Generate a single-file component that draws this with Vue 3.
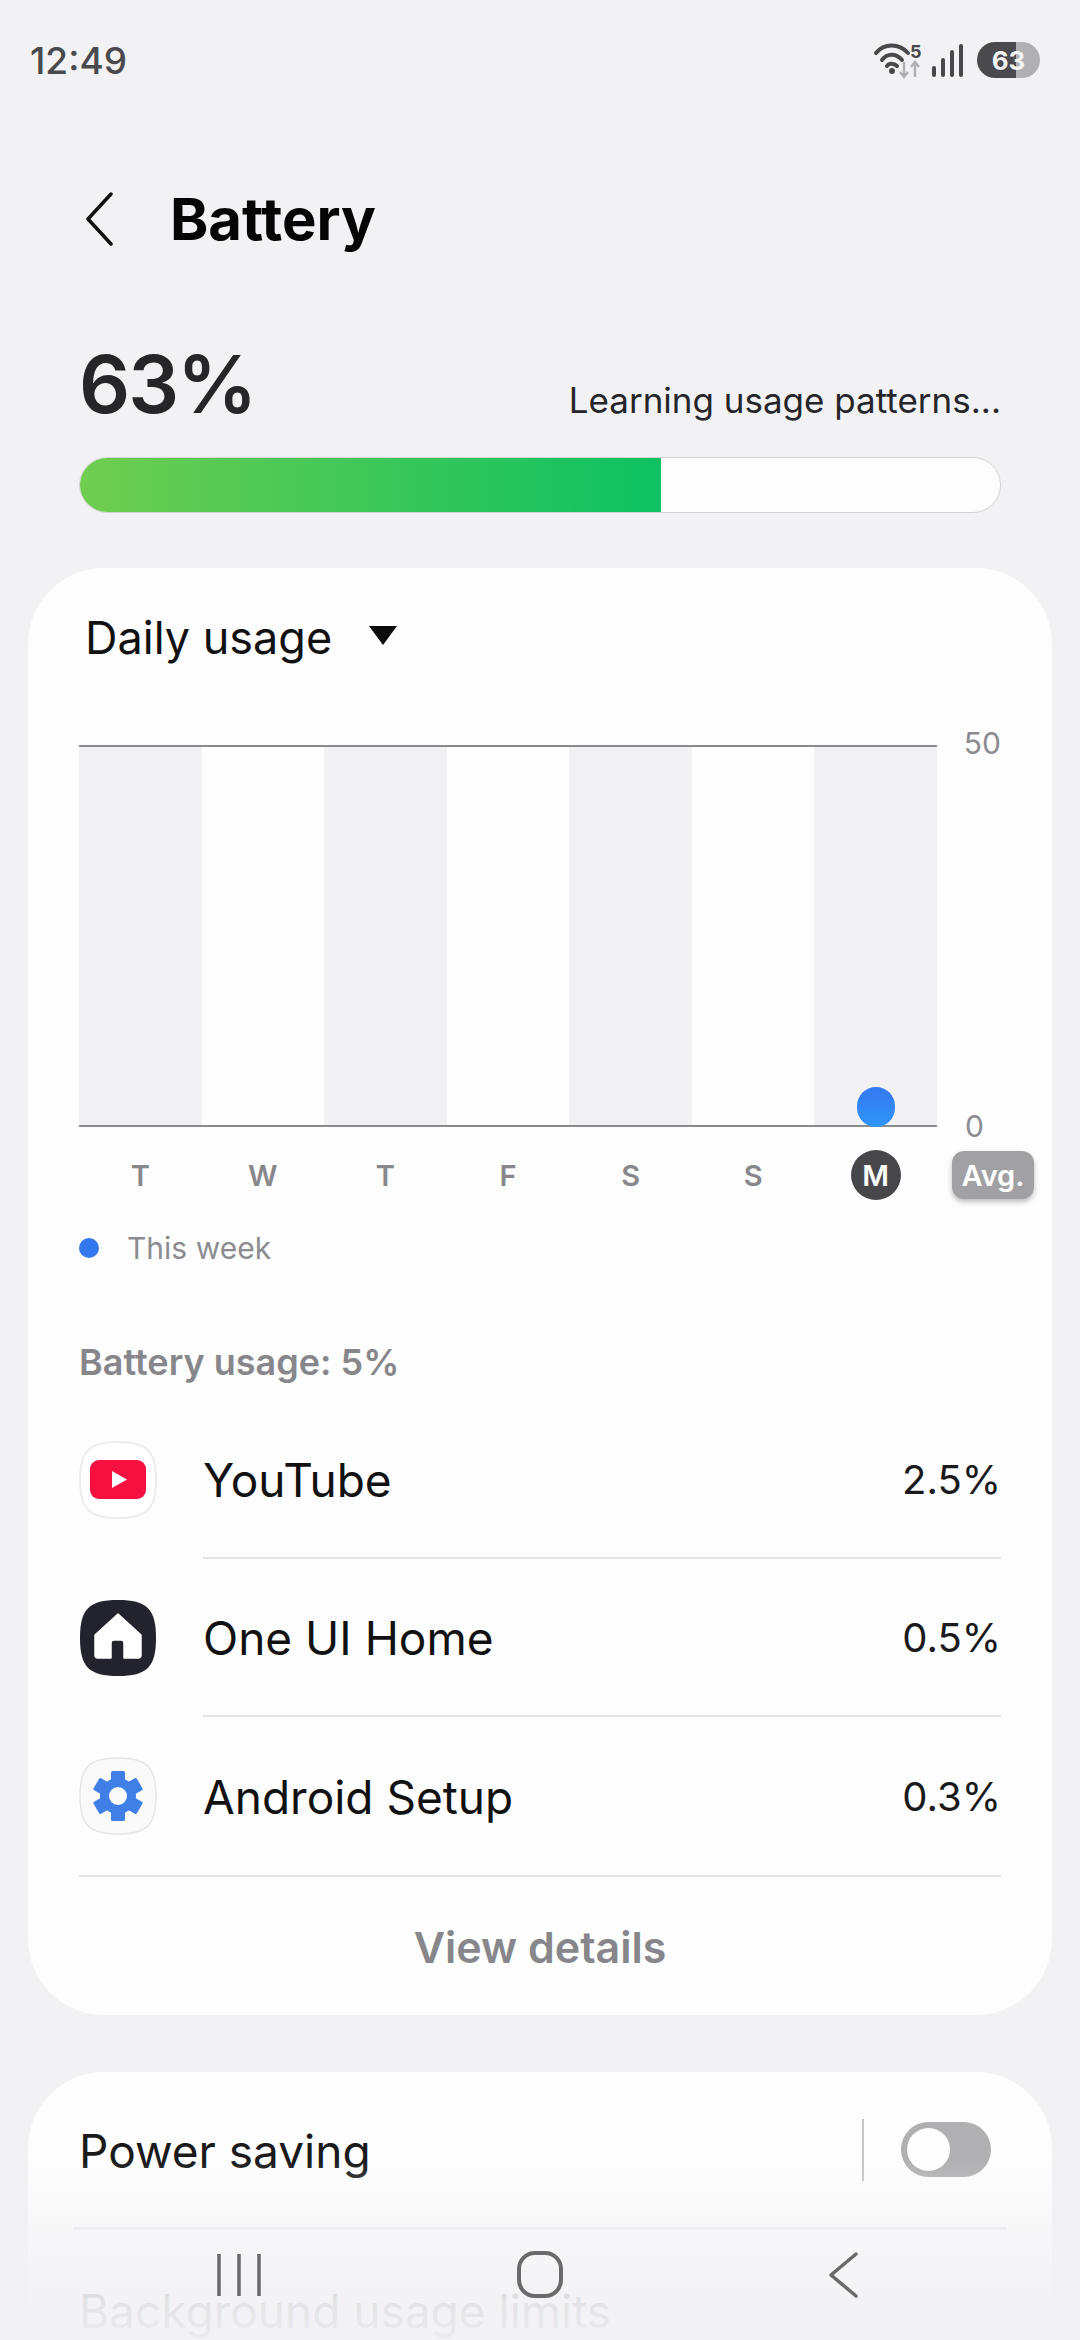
<template>
  <div class="screen">
    <div class="status-bar">
      <span class="clock">12:49</span>
      <div class="status-icons">
        <svg class="wifi" width="50" height="36" viewBox="0 0 50 36">
          <g fill="none" stroke="#48484c" stroke-width="4" stroke-linecap="round">
            <path d="M3 11 C11 1 26 1 35 11" />
            <path d="M9 18 C14 11 23 11 29 18" />
            <path d="M14 24 C16 21 21 21 24 24" />
          </g>
          <circle cx="19" cy="29" r="3" fill="#48484c" />
          <text x="37" y="16" class="wifi-num">5</text>
          <g fill="none" stroke="#b0b0b2" stroke-width="2.500">
            <path d="M31 20 V35 M27 30 L31 35 L35 30" />
            <path d="M42 35 V20 M38 25 L42 20 L46 25" />
          </g>
        </svg>
        <div class="signal">
          <i v-for="h in signalBars" :key="h" :style="{ height: h + 'px' }"></i>
        </div>
        <div class="batt"><span>63</span></div>
      </div>
    </div>

    <header class="title-row">
      <svg class="back" width="30" height="54" viewBox="0 0 30 54">
        <path d="M27 2 L4 27 L27 52" fill="none" stroke="#111" stroke-width="3.500" stroke-linecap="round" stroke-linejoin="round" />
      </svg>
      <h1>Battery</h1>
    </header>

    <div class="level">
      <div class="level-row">
        <span class="pct">63%</span>
        <span class="learning">Learning usage patterns...</span>
      </div>
      <div class="level-bar"><div class="level-fill"></div></div>
    </div>

    <section class="card usage">
      <div class="dropdown">
        <span>Daily usage</span>
        <i class="caret"></i>
      </div>

      <div class="chart">
        <div class="plot">
          <div v-for="(d, i) in days" :key="i" class="col" :class="{ shaded: i % 2 === 0 }">
            <div v-if="i === 6" class="bar"></div>
          </div>
        </div>
        <div class="axis">
          <span>50</span>
          <span>0</span>
        </div>
      </div>

      <div class="days">
        <div class="day-cols">
          <span v-for="(d, i) in days" :key="i" class="day" :class="{ today: i === 6 }">{{ d }}</span>
        </div>
        <span class="avg">Avg.</span>
      </div>

      <div class="legend">
        <i></i>
        <span>This week</span>
      </div>

      <h2 class="usage-title">Battery usage: 5%</h2>

      <div class="app-row">
        <svg class="app-icon" width="78" height="78" viewBox="0 0 78 78">
          <path :d="SQUIRCLE" fill="#fff" stroke="#e9e9ec" stroke-width="1.500" />
          <rect x="11" y="19" width="56" height="39" rx="9" fill="#f5103f" />
          <path d="M33 30 L48 38.500 L33 47 Z" fill="#fff" />
        </svg>
        <div class="app-body">
          <span class="app-name">YouTube</span>
          <span class="app-val">2.5%</span>
        </div>
      </div>
      <div class="app-row">
        <svg class="app-icon" width="78" height="78" viewBox="0 0 78 78">
          <path :d="SQUIRCLE" fill="#23232e" />
          <path d="M39 15 L62 36 V56 Q62 59 59 59 H45 V44 Q45 41 42 41 H35 Q32 41 32 44 V59 H19 Q16 59 16 56 V36 Z" fill="#fff" stroke="#fff" stroke-width="1.500" stroke-linejoin="round" />
        </svg>
        <div class="app-body">
          <span class="app-name">One UI Home</span>
          <span class="app-val">0.5%</span>
        </div>
      </div>
      <div class="app-row last">
        <svg class="app-icon" width="78" height="78" viewBox="0 0 78 78">
          <path :d="SQUIRCLE" fill="#fafafb" stroke="#e6e6e9" stroke-width="1.500" />
          <g fill="#3f7fe6">
            <rect v-for="a in gearTeeth" :key="a" x="32" y="14" width="14" height="50" rx="1.500" :transform="`rotate(${a} 39 39)`" />
            <circle cx="39" cy="39" r="18" />
          </g>
          <circle cx="39" cy="39" r="9" fill="#fafafb" />
        </svg>
        <div class="app-body">
          <span class="app-name">Android Setup</span>
          <span class="app-val">0.3%</span>
        </div>
      </div>

      <div class="view-details">View details</div>
    </section>

    <section class="card settings">
      <div class="setting-row first">
        <span>Power saving</span>
        <div class="toggle-wrap">
          <div class="toggle"><i></i></div>
        </div>
      </div>
      <div class="setting-row">
        <span>Background usage limits</span>
      </div>
    </section>

    <div class="nav">
      <svg width="46" height="44" viewBox="0 0 46 44" class="nav-recents">
        <path d="M3 1 V43 M23 1 V43 M43 1 V43" fill="none" stroke="#6a6a6e" stroke-width="3.500" />
      </svg>
      <svg width="48" height="47" viewBox="0 0 48 47" class="nav-home">
        <rect x="3" y="2" width="42" height="43" rx="16" fill="none" stroke="#6a6a6e" stroke-width="4" />
      </svg>
      <svg width="32" height="46" viewBox="0 0 32 46" class="nav-back">
        <path d="M29 2 L4 23 L29 44" fill="none" stroke="#6a6a6e" stroke-width="3.500" stroke-linecap="round" stroke-linejoin="round" />
      </svg>
    </div>
  </div>
</template>

<script setup>
const days = ['T', 'W', 'T', 'F', 'S', 'S', 'M'];
const signalBars = [11, 19, 27, 33];
const gearTeeth = [0, 60, 120];
const SQUIRCLE = 'M39 1 C68 1 77 10 77 39 C77 68 68 77 39 77 C10 77 1 68 1 39 C1 10 10 1 39 1 Z';
</script>

<style>
html, body { margin: 0; background: #f2f2f4; }
</style>

<style scoped>
* { box-sizing: border-box; margin: 0; padding: 0; }
.screen { position: relative; width: 1080px; height: 2340px; overflow: hidden; background: #f2f2f4; font-family: Inter, "Noto Sans", sans-serif; color: #111; }

/* status bar */
.status-bar { display: flex; justify-content: space-between; align-items: center; height: 120px; padding: 0 40px 0 30px; }
.clock { font-size: 37px; font-weight: 500; color: #4a4a4e; }
.status-icons { display: flex; align-items: center; }
.wifi { margin-right: 9px; overflow: visible; }
.wifi-num { font: 700 18px Inter, sans-serif; fill: #48484c; }
.signal { display: flex; align-items: flex-end; gap: 5px; height: 33px; margin-right: 14px; }
.signal i { width: 4px; background: #48484c; border-radius: 2px; }
.batt { width: 63px; height: 36px; border-radius: 18px; display: flex; align-items: center; justify-content: center; background: linear-gradient(90deg, #4a4a4e 0 62%, #b0b0b2 62% 100%); }
.batt span { font-size: 26px; font-weight: 700; color: #f4f4f4; }

/* title */
.title-row { display: flex; align-items: center; height: 60px; margin-top: 69px; padding-left: 84px; }
.back { margin-right: 56px; }
h1 { font-size: 58px; font-weight: 700; color: #050505; }

/* level */
.level { margin-top: 91px; padding: 0 79px; }
.level-row { display: flex; justify-content: space-between; align-items: flex-end; height: 88px; }
.pct { font-size: 80px; font-weight: 600; line-height: 88px; color: #26262a; letter-spacing: -2px; }
.learning { font-size: 35px; line-height: 44px; margin-bottom: 6px; color: #26262a; }
.level-bar { height: 56px; margin-top: 29px; border-radius: 28px; background: #fdfdfe; border: 1px solid #d3d3d6; overflow: hidden; }
.level-fill { width: 63.300%; height: 56px; background: linear-gradient(90deg, #70cd50, #0cc162); margin: -1px 0 0 -1px; }

/* cards */
.card { background: #fdfdfe; border-radius: 76px; margin: 0 28px; }
.usage { margin-top: 55px; height: 1447px; padding: 44px 51px 0 51px; }
.dropdown { display: flex; align-items: center; height: 50px; padding-left: 6px; font-size: 45px; color: #111; }
.caret { width: 0; height: 0; margin: -4px 0 0 37px; border-left: 14px solid transparent; border-right: 14px solid transparent; border-top: 19px solid #0c0c0c; }

/* chart */
.chart { display: flex; margin-top: 83px; height: 382px; }
.plot { display: grid; grid-template-columns: repeat(7, 1fr); flex: none; width: 858px; height: 100%; border-top: 2px solid #8a8a8d; border-bottom: 2px solid #8a8a8d; }
.col { display: flex; align-items: flex-end; justify-content: center; }
.col.shaded { background: #f2f2f4; }
.bar { width: 38px; height: 40px; margin-bottom: -2px; border-radius: 19px; background: linear-gradient(180deg, #3478f0, #2f96f8); }
.axis { display: flex; flex-direction: column; justify-content: space-between; align-items: flex-end; flex: 1; margin: -20px 0 -17px; font-size: 30px; line-height: 36px; color: #8c8c90; }
.axis span:last-child { margin-right: 17px; }

.days { display: flex; align-items: center; height: 50px; margin-top: 23px; }
.day-cols { display: grid; grid-template-columns: repeat(7, 1fr); flex: none; width: 858px; justify-items: center; align-items: center; }
.day { width: 50px; height: 50px; border-radius: 50%; display: flex; align-items: center; justify-content: center; font-size: 29px; font-weight: 600; color: #88888c; }
.day.today { background: #47474b; color: #fff; }
.avg { flex: none; width: 82px; height: 48px; margin-left: 15px; border-radius: 12px; display: flex; align-items: center; justify-content: center; font-size: 29px; font-weight: 600; color: #fff; background: #a1a1a4; box-shadow: 0 3px 5px rgba(0, 0, 0, 0.25); }

.legend { display: flex; align-items: center; height: 40px; margin-top: 28px; font-size: 30px; color: #8c8c90; }
.legend i { width: 20px; height: 20px; border-radius: 50%; background: #3478f0; margin-right: 28px; }

.usage-title { display: flex; align-items: center; height: 40px; margin-top: 74px; font-size: 36px; font-weight: 600; color: #87878b; }

/* app rows */
.usage-title + .app-row { margin-top: 19px; }
.app-row { display: flex; align-items: center; height: 158px; }
.app-icon { flex: none; margin-right: 46px; }
.app-body { flex: 1; height: 100%; display: flex; align-items: center; justify-content: space-between; border-bottom: 2px solid #e4e4e7; }
.app-name { font-size: 46px; padding-top: 2px; color: #111; }
.app-val { font-size: 40px; color: #1a1a1a; }
.app-row.last .app-body { border-bottom: none; }
.view-details { display: flex; align-items: center; justify-content: center; height: 140px; padding-top: 2px; border-top: 2px solid #e4e4e7; font-size: 43px; font-weight: 600; color: #87878b; }

/* settings */
.settings { margin-top: 57px; padding: 0 45px; }
.setting-row { display: flex; align-items: center; justify-content: space-between; height: 158px; padding: 0 6px; font-size: 46px; color: #1a1a1a; }
.setting-row > span { padding-top: 3px; }
.setting-row.first { border-bottom: 3px solid #e9e9ec; }
.toggle-wrap { display: flex; align-items: center; justify-content: flex-end; width: 129px; height: 62px; margin-right: 10px; border-left: 2px solid #c6c6c9; }
.toggle { width: 90px; height: 55px; border-radius: 28px; background: #b0b0b3; padding: 6px; }
.toggle i { display: block; width: 43px; height: 43px; border-radius: 50%; background: #fdfdfe; }

/* nav bar over the list */
.nav { position: absolute; left: 0; right: 0; bottom: 0; height: 180px; background: linear-gradient(180deg, rgba(242, 242, 244, 0) 0%, rgba(242, 242, 244, 0.55) 40%, rgba(242, 242, 244, 0.93) 78%, rgba(242, 242, 244, 0.97) 100%); }
.nav svg { position: absolute; }
.nav-recents { left: 216px; top: 93px; }
.nav-home { left: 516px; top: 91px; }
.nav-back { left: 827px; top: 92px; }
</style>
